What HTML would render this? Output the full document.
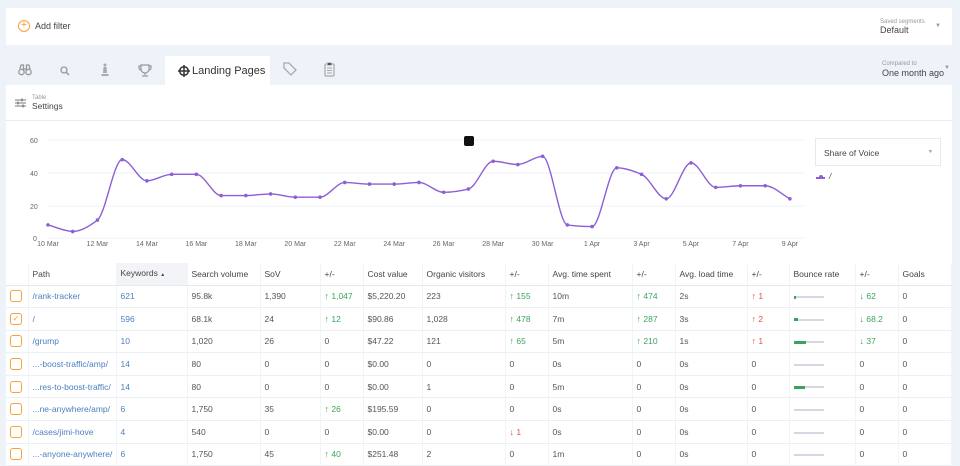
<!DOCTYPE html>
<html><head><meta charset="utf-8"><style>
*{box-sizing:border-box;margin:0;padding:0}
body{width:960px;height:465px;overflow:hidden;background:#eef2f9;font-family:"Liberation Sans",sans-serif;color:#444;position:relative}
.abs{position:absolute}
.filter{left:6px;top:8px;width:946px;height:37px;background:#fff}
.panel{left:6px;top:85px;width:946px;height:380px;background:#fff}
table{position:absolute;left:6px;top:263px;width:946px;border-collapse:collapse;font-size:8.5px;table-layout:fixed}
td,th{height:22.6px;border-bottom:1px solid #eceff4;border-right:1px solid #f1f3f7;padding-left:4px;text-align:left;font-weight:normal;white-space:nowrap;overflow:hidden;color:#555;line-height:10px}
th{height:22px;border-bottom:1.5px solid #e4e8f0;color:#444}
td a{color:#4a7fc0}
.g{color:#3aa55a}.r{color:#e05540}
.g b,.r b{font-weight:bold;font-size:9px}
.cb{display:inline-block;width:12px;height:12px;border:1.5px solid #f3a33a;border-radius:3px;margin-left:0;vertical-align:middle;font-size:8px;line-height:9px;text-align:center;color:#f3a33a}
.bar{display:inline-block;width:30px;height:2px;background:#d5d8e2;vertical-align:middle;position:relative}
.bar i{position:absolute;left:0;top:-0.5px;height:3px;background:#3aa55a}
</style></head><body>
<div class="abs filter"></div>
<div class="abs" style="left:18px;top:20px;width:12px;height:12px;border:1.3px solid #f3a33a;border-radius:50%;color:#f3a33a;font-size:11px;line-height:9px;text-align:center">+</div>
<div class="abs" style="left:35px;top:21px;font-size:9px;color:#444">Add filter</div>
<div class="abs" style="left:880px;top:19px;font-size:6px;color:#999">Saved segments</div>
<div class="abs" style="left:880px;top:25px;font-size:9px;color:#444">Default</div>
<div class="abs" style="left:935px;top:23px;font-size:6px;color:#999">▼</div>

<div class="abs" style="left:165px;top:56px;width:105px;height:30px;background:#fff"></div>
<svg class="abs" style="left:18px;top:64px" width="14" height="12" viewBox="0 0 14 12"><g fill="none" stroke="#999" stroke-width="1.3"><circle cx="3.5" cy="8" r="2.7"/><circle cx="10.5" cy="8" r="2.7"/><path d="M2 5L3 1h2.5v6M12 5L11 1H8.5v6M5.5 5h3"/></g></svg>
<svg class="abs" style="left:60px;top:66px" width="10" height="10" viewBox="0 0 10 10"><circle cx="4" cy="4" r="3" fill="none" stroke="#999" stroke-width="1.3"/><path d="M6.3 6.3L9 9" stroke="#999" stroke-width="1.5"/></svg>
<svg class="abs" style="left:100px;top:63px" width="10" height="14" viewBox="0 0 10 14"><path d="M5 0.5a1.5 1.5 0 1 1 0 3 1.5 1.5 0 1 1 0-3M3.5 4h3l0.5 6h-4zM1.5 11h7v2h-7z" fill="#aaa"/></svg>
<svg class="abs" style="left:138px;top:64px" width="14" height="13" viewBox="0 0 14 13"><path d="M3 1h8v4a4 4 0 0 1-8 0zM3 2H1v2a2 2 0 0 0 2 2M11 2h2v2a2 2 0 0 1-2 2M7 9v2M4 12h6" fill="none" stroke="#999" stroke-width="1.2"/></svg>
<svg class="abs" style="left:178px;top:65px" width="12" height="12" viewBox="0 0 12 12"><circle cx="6" cy="6" r="4.3" fill="none" stroke="#333" stroke-width="1.5"/><path d="M6 0v12M0 6h12" stroke="#333" stroke-width="1.5"/></svg>
<div class="abs" style="left:192px;top:65px;font-size:11px;color:#333">Landing Pages</div>
<svg class="abs" style="left:283px;top:62px" width="14" height="15" viewBox="0 0 14 15"><path d="M1 1h5l7 7-5 5-7-7z M4 4.5h.1" fill="none" stroke="#aaa" stroke-width="1.3"/></svg>
<svg class="abs" style="left:324px;top:62px" width="11" height="15" viewBox="0 0 11 15"><rect x="1" y="2" width="9" height="12" rx="1" fill="none" stroke="#aaa" stroke-width="1.2"/><path d="M3.5 1h4v2h-4zM3 6h5M3 8.5h5M3 11h5" stroke="#aaa" stroke-width="1"/></svg>
<div class="abs" style="left:882px;top:61px;font-size:6px;color:#999">Compared to</div>
<div class="abs" style="left:882px;top:68px;font-size:9px;color:#444">One month ago</div>
<div class="abs" style="left:944px;top:65px;font-size:6px;color:#999">▼</div>

<div class="abs panel"></div>
<svg class="abs" style="left:15px;top:98px" width="11" height="10" viewBox="0 0 11 10"><path d="M0 2h11M0 5h11M0 8h11" stroke="#777" stroke-width="1"/><path d="M7 0.5v3M3 3.5v3M8 6.5v3" stroke="#777" stroke-width="1.3"/></svg>
<div class="abs" style="left:32px;top:95px;font-size:6px;color:#999">Table</div>
<div class="abs" style="left:32px;top:101px;font-size:8.5px;color:#444">Settings</div>
<div class="abs" style="left:6px;top:120px;width:946px;height:1px;background:#e8ebf2"></div>

<svg class="abs" style="left:0;top:125px" width="810" height="135">
<g stroke="#eef0f4" stroke-width="1"><line x1="48" x2="805" y1="15" y2="15"/><line x1="48" x2="805" y1="48" y2="48"/><line x1="48" x2="805" y1="81" y2="81"/><line x1="48" x2="805" y1="113" y2="113"/></g>
<g font-size="7" fill="#666" font-family="Liberation Sans"><text x="30" y="18">60</text><text x="30" y="51">40</text><text x="30" y="84">20</text><text x="33" y="116">0</text></g>
<g font-size="7" fill="#666" font-family="Liberation Sans" id="xl"></g>
<path id="ln" fill="none" stroke="#8e5fd4" stroke-width="1.4"/>
<g id="dots" fill="#8e5fd4"></g>
</svg>
<div class="abs" style="left:464px;top:136px;width:10px;height:10px;background:#111;border-radius:2px"></div>
<div class="abs" style="left:815px;top:138px;width:126px;height:28px;border:1px solid #e6e9f0"></div>
<div class="abs" style="left:824px;top:148px;font-size:8.5px;color:#444">Share of Voice</div>
<div class="abs" style="left:928px;top:149px;font-size:5px;color:#999">▼</div>
<div class="abs" style="left:816px;top:177px;width:9px;height:2px;background:#8e5fd4"></div>
<div class="abs" style="left:819px;top:175px;width:4px;height:4px;border-radius:50%;background:#8e5fd4"></div>
<div class="abs" style="left:829px;top:172px;font-size:8px;font-style:italic;color:#444">/</div>

<table>
<colgroup><col style="width:22px"><col style="width:88px"><col style="width:71px"><col style="width:73px"><col style="width:60px"><col style="width:43px"><col style="width:59px"><col style="width:83px"><col style="width:43px"><col style="width:84px"><col style="width:43px"><col style="width:72px"><col style="width:42px"><col style="width:66px"><col style="width:43px"><col></colgroup>
<tr><th></th><th>Path</th><th style="background:#f3f4f7">Keywords <span style="font-size:5px">▲</span></th><th>Search volume</th><th>SoV</th><th>+/-</th><th>Cost value</th><th>Organic visitors</th><th>+/-</th><th>Avg. time spent</th><th>+/-</th><th>Avg. load time</th><th>+/-</th><th>Bounce rate</th><th>+/-</th><th>Goals</th></tr>
<tr><td><span class="cb"></span></td><td><a>/rank-tracker</a></td><td><a>621</a></td><td>95.8k</td><td>1,390</td><td class="g"><b>↑</b> 1,047</td><td>$5,220.20</td><td>223</td><td class="g"><b>↑</b> 155</td><td>10m</td><td class="g"><b>↑</b> 474</td><td>2s</td><td class="r"><b>↑</b> 1</td><td><span class="bar"><i style="width:2px"></i></span></td><td class="g"><b>↓</b> 62</td><td>0</td></tr>
<tr><td><span class="cb">✓</span></td><td><a>/</a></td><td><a>596</a></td><td>68.1k</td><td>24</td><td class="g"><b>↑</b> 12</td><td>$90.86</td><td>1,028</td><td class="g"><b>↑</b> 478</td><td>7m</td><td class="g"><b>↑</b> 287</td><td>3s</td><td class="r"><b>↑</b> 2</td><td><span class="bar"><i style="width:4px"></i></span></td><td class="g"><b>↓</b> 68.2</td><td>0</td></tr>
<tr><td><span class="cb"></span></td><td><a>/grump</a></td><td><a>10</a></td><td>1,020</td><td>26</td><td>0</td><td>$47.22</td><td>121</td><td class="g"><b>↑</b> 65</td><td>5m</td><td class="g"><b>↑</b> 210</td><td>1s</td><td class="r"><b>↑</b> 1</td><td><span class="bar"><i style="width:12px"></i></span></td><td class="g"><b>↓</b> 37</td><td>0</td></tr>
<tr><td><span class="cb"></span></td><td><a>...-boost-traffic/amp/</a></td><td><a>14</a></td><td>80</td><td>0</td><td>0</td><td>$0.00</td><td>0</td><td>0</td><td>0s</td><td>0</td><td>0s</td><td>0</td><td><span class="bar"></span></td><td>0</td><td>0</td></tr>
<tr><td><span class="cb"></span></td><td><a>...res-to-boost-traffic/</a></td><td><a>14</a></td><td>80</td><td>0</td><td>0</td><td>$0.00</td><td>1</td><td>0</td><td>5m</td><td>0</td><td>0s</td><td>0</td><td><span class="bar"><i style="width:11px"></i></span></td><td>0</td><td>0</td></tr>
<tr><td><span class="cb"></span></td><td><a>...ne-anywhere/amp/</a></td><td><a>6</a></td><td>1,750</td><td>35</td><td class="g"><b>↑</b> 26</td><td>$195.59</td><td>0</td><td>0</td><td>0s</td><td>0</td><td>0s</td><td>0</td><td><span class="bar"></span></td><td>0</td><td>0</td></tr>
<tr><td><span class="cb"></span></td><td><a>/cases/jimi-hove</a></td><td><a>4</a></td><td>540</td><td>0</td><td>0</td><td>$0.00</td><td>0</td><td class="r"><b>↓</b> 1</td><td>0s</td><td>0</td><td>0s</td><td>0</td><td><span class="bar"></span></td><td>0</td><td>0</td></tr>
<tr><td><span class="cb"></span></td><td><a>...-anyone-anywhere/</a></td><td><a>6</a></td><td>1,750</td><td>45</td><td class="g"><b>↑</b> 40</td><td>$251.48</td><td>2</td><td>0</td><td>1m</td><td>0</td><td>0s</td><td>0</td><td><span class="bar"></span></td><td>0</td><td>0</td></tr>
</table>
<script>
var v=[8,4,11,48,35,39,39,26,26,27,25,25,34,33,33,34,28,30,47,45,50,8,7,43,39,24,46,31,32,32,24];
var P=v.map(function(a,i){return [48+24.73*i,113-1.633*a]});
var n=P.length,h=24.73,dl=[],m=[];
for(var i=0;i<n-1;i++)dl.push((P[i+1][1]-P[i][1])/h);
m[0]=dl[0];m[n-1]=dl[n-2];
for(var i=1;i<n-1;i++){if(dl[i-1]*dl[i]<=0)m[i]=0;else m[i]=2/(1/dl[i-1]+1/dl[i]);}
var d="M"+P[0][0]+" "+P[0][1];
for(var i=0;i<n-1;i++){var a=P[i],b=P[i+1];
d+=" C"+(a[0]+h/3)+" "+(a[1]+m[i]*h/3)+" "+(b[0]-h/3)+" "+(b[1]-m[i+1]*h/3)+" "+b[0]+" "+b[1];}
document.getElementById("ln").setAttribute("d",d);
var ns="http://www.w3.org/2000/svg",g=document.getElementById("dots");
P.forEach(function(p){var c=document.createElementNS(ns,"circle");c.setAttribute("cx",p[0]);c.setAttribute("cy",p[1]);c.setAttribute("r",1.8);g.appendChild(c);});
var L=["10 Mar","12 Mar","14 Mar","16 Mar","18 Mar","20 Mar","22 Mar","24 Mar","26 Mar","28 Mar","30 Mar","1 Apr","3 Apr","5 Apr","7 Apr","9 Apr"],x=document.getElementById("xl");
L.forEach(function(t,i){var e=document.createElementNS(ns,"text");e.setAttribute("x",48+49.46*i);e.setAttribute("y",121);e.setAttribute("text-anchor","middle");e.textContent=t;x.appendChild(e);});
</script>
</body></html>
